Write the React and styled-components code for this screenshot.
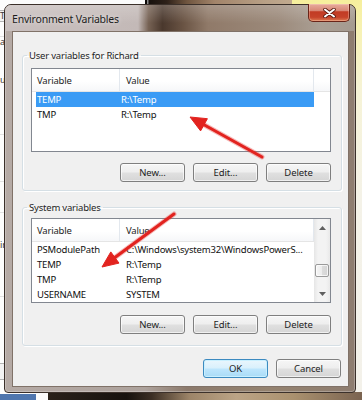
import React from 'react'
import styled, { createGlobalStyle, css } from 'styled-components'

const GlobalStyle = createGlobalStyle`
  *, *::before, *::after { box-sizing: border-box; }
  html, body { margin: 0; padding: 0; background: #fbfbfb; }
  body {
    font-family: "Noto Sans", "Open Sans", sans-serif;
    font-size: 9.5px;
    overflow: hidden;
  }
`

const userVars = [
  { name: 'TEMP', value: 'R:\\Temp', selected: true },
  { name: 'TMP', value: 'R:\\Temp' },
]

const systemVars = [
  { name: 'PSModulePath', value: 'C:\\Windows\\system32\\WindowsPowerS...' },
  { name: 'TEMP', value: 'R:\\Temp' },
  { name: 'TMP', value: 'R:\\Temp' },
  { name: 'USERNAME', value: 'SYSTEM' },
]

// strip of the window that sits behind the dialog on the left
const backRows = [
  { h: 10 },
  { h: 12, text: 'T', boxed: true },
  { h: 15, line: true },
  { h: 10, text: 'a' },
  { h: 28 },
  { h: 10, text: 'us' },
  { h: 50, line: true },
  { h: 47, line: true },
  { h: 31, line: true },
  { h: 27 },
  { h: 10, text: 'ir' },
  { h: 47, line: true },
  { h: 66 },
  { h: 17, boxed: true },
]

export default function App(){
  return(
    <>
      <GlobalStyle />
      <Desktop>
        <BackWindow>
          {backRows.map((r, i) => (
            <BackRow key={i} $h={r.h} $line={r.line} $boxed={r.boxed}>{r.text}</BackRow>
          ))}
        </BackWindow>
        <Photo />
        <Note />
        <BottomPhoto />
        <TaskChip />

        <Dialog>
          <TitleBar>
            <Title>Environment Variables</Title>
            <CloseButton>
              <svg width="13" height="10" viewBox="0 0 13 10">
                <path d="M2 1.5 L11 8.5 M11 1.5 L2 8.5" stroke="#5b1a10" strokeWidth="3.6" strokeLinecap="round" />
                <path d="M2 1.5 L11 8.5 M11 1.5 L2 8.5" stroke="#ffffff" strokeWidth="2" strokeLinecap="round" />
              </svg>
            </CloseButton>
          </TitleBar>

          <Client>
            <Group $mt={16} $pt={5} $pb={8}>
              <Legend>User variables for Richard</Legend>
              <VarList rows={userVars} height={84} valueInset={1} />
              <ButtonRow $mt={11}>
                <Button>New...</Button>
                <Button>Edit...</Button>
                <Button>Delete</Button>
              </ButtonRow>
            </Group>

            <Group $mt={9} $pt={3} $pb={11}>
              <Legend>System variables</Legend>
              <VarList rows={systemVars} height={85} valueInset={6} scroll={28} />
              <ButtonRow $mt={12}>
                <Button>New...</Button>
                <Button>Edit...</Button>
                <Button>Delete</Button>
              </ButtonRow>
            </Group>

            <DialogButtons>
              <Button $default>OK</Button>
              <Button>Cancel</Button>
            </DialogButtons>
          </Client>
        </Dialog>

        <Arrows viewBox="0 0 362 400">
          <g stroke="#e63a36" strokeWidth="5" strokeOpacity="0.35" fill="none" strokeLinecap="round">
            <line x1="262" y1="157" x2="204" y2="124.8" />
            <line x1="174" y1="214" x2="114.9" y2="257.5" />
          </g>
          <g stroke="#e2231f" strokeWidth="3" fill="none" strokeLinecap="round">
            <line x1="262" y1="157" x2="204" y2="124.8" />
            <line x1="174" y1="214" x2="114.9" y2="257.5" />
          </g>
          <g fill="#e2231f" stroke="#e2231f" strokeWidth="1" strokeLinejoin="round">
            <polygon points="190,117 207.4,118.7 200.6,130.9" />
            <polygon points="102,267 119,263.1 110.8,251.9" />
          </g>
        </Arrows>
      </Desktop>
    </>
  )
}

function VarList({ rows, height, valueInset, scroll }){
  return(
    <ListBox $h={height}>
      <ListMain>
        <Header>
          <HeadCell $w={88} $pl={5}>Variable</HeadCell>
          <HeadCell $w={194} $pl={6}>Value</HeadCell>
          <HeadFiller />
        </Header>
        {rows.map(r => (
          <Row key={r.name} $selected={r.selected}>
            <Cell $w={84} $pl={1}>{r.name}</Cell>
            <Cell $w={194} $pl={valueInset}>{r.value}</Cell>
          </Row>
        ))}
      </ListMain>
      {scroll !== undefined && (
        <Scrollbar>
          <ScrollArrow>
            <svg width="7" height="4" viewBox="0 0 7 4"><polygon points="0,4 3.5,0 7,4" fill="#5f5f5f" /></svg>
          </ScrollArrow>
          <Track>
            <Thumb $offset={scroll} />
          </Track>
          <ScrollArrow>
            <svg width="7" height="4" viewBox="0 0 7 4"><polygon points="0,0 3.5,4 7,0" fill="#5f5f5f" /></svg>
          </ScrollArrow>
        </Scrollbar>
      )}
    </ListBox>
  )
}

const Desktop = styled.div`
  position: relative;
  width: 362px;
  height: 400px;
  overflow: hidden;
  background: #fbfbfb;
`

const BackWindow = styled.div`
  position: absolute;
  left: 0;
  top: 0;
  width: 12px;
  height: 400px;
  display: flex;
  flex-direction: column;
  overflow: hidden;
  background: #fdfdfd;
`

const BackRow = styled.div`
  height: ${p => p.$h}px;
  flex-shrink: 0;
  display: flex;
  align-items: center;
  font-size: 9px;
  line-height: 10px;
  color: #3a3a3a;
  ${p => p.$line && css`
    border-bottom: 1px solid #e2e2e2;
  `}
  ${p => p.$boxed && css`
    border: 1px solid #b4b4b4;
    border-left: none;
    background: #f3f3f3;
  `}
`

const Photo = styled.div`
  position: absolute;
  left: 145px;
  top: 0;
  width: 150px;
  height: 12px;
  background: linear-gradient(90deg, #0d0b09 0, #0d0b09 2px, #8a8a8a 2px, #8a8a8a 3px, #17110d 4px, #2e2119 22px, #6f553f 42px, #a2846a 70px, #b8a086 120px, #c2ab90 150px);
`

const Note = styled.div`
  position: absolute;
  left: 292px;
  top: 0;
  width: 70px;
  height: 400px;
  background: linear-gradient(180deg, #f6ef9c 0, #f7f2b4 30px, #f6f3d6 90px, #f4f2e8 200px, #f3f1ea 400px);
`

const BottomPhoto = styled.div`
  position: absolute;
  left: 48px;
  top: 392px;
  width: 314px;
  height: 8px;
  background: linear-gradient(90deg, #2a211a 0, #17120e 25%, #3b2e24 33%, #9c8468 45%, #bca486 60%, #aa916f 78%, #7a6350 100%);
`

const TaskChip = styled.div`
  position: absolute;
  left: 0;
  top: 394px;
  width: 36px;
  height: 6px;
  background: #4f76ae;
`

const Dialog = styled.div`
  position: absolute;
  left: 4px;
  top: 4px;
  width: 352px;
  height: 389px;
  display: flex;
  flex-direction: column;
  padding: 0 6px 5px 7px;
  border: 1px solid #3b302a;
  border-radius: 7px 7px 4px 4px;
  background: linear-gradient(90deg, #b5aaa5 0%, #ada29c 40%, #8c7a6c 52%, #94826f 75%, #8e7d70 100%);
  box-shadow: inset 0 0 0 1px rgba(255, 255, 255, 0.25);
`

const TitleBar = styled.div`
  height: 26px;
  flex-shrink: 0;
  margin: 0 -6px 0 -7px;
  padding: 0 5px 0 7px;
  display: flex;
  align-items: center;
  justify-content: space-between;
  border-radius: 6px 6px 0 0;
  background:
    linear-gradient(180deg, rgba(255, 255, 255, 0.2), rgba(255, 255, 255, 0) 70%),
    linear-gradient(90deg, #c9c0bf 0%, #c3b9b7 38%, #766254 41%, #4a382d 45%, #6a5444 51%, #907a69 58%, #9c8a7b 78%, #aa9f94 90%, #a59a90 100%);
`

const Title = styled.span`
  font-size: 10.5px;
  letter-spacing: -0.2px;
  color: #1d1d1d;
  text-shadow: 0 0 5px rgba(255, 255, 255, 0.75);
  margin-top: 1px;
`

const CloseButton = styled.div`
  align-self: flex-start;
  width: 42px;
  height: 18px;
  margin-top: -1px;
  display: flex;
  align-items: center;
  justify-content: center;
  border: 1px solid #6a2418;
  border-top: none;
  border-radius: 0 0 5px 5px;
  background: linear-gradient(180deg, #e8ab9d 0%, #d98a78 38%, #c23b24 46%, #c6432a 78%, #de7a52 100%);
  box-shadow: inset 0 0 0 1px rgba(255, 220, 200, 0.35);
`

const Client = styled.div`
  flex: 1;
  display: flex;
  flex-direction: column;
  padding: 0 6px 0 9px;
  background: #f0f0f0;
  border: 1px solid #807268;
`

const Group = styled.fieldset`
  margin: ${p => p.$mt}px 0 0 0;
  padding: ${p => p.$pt}px 10px ${p => p.$pb}px 8px;
  min-width: 0;
  border: 1px solid #d5dfe5;
  border-radius: 3px;
  box-shadow: inset 1px 1px 0 #fff, 1px 1px 0 #fff;
`

const Legend = styled.legend`
  margin-left: -4px;
  padding: 0 2px;
  line-height: 15px;
  font-size: 9.5px;
  letter-spacing: -0.2px;
  color: #1e1e1e;
`

const ListBox = styled.div`
  display: flex;
  height: ${p => p.$h}px;
  border: 1px solid #828790;
  background: #fff;
  overflow: hidden;
`

const ListMain = styled.div`
  flex: 1;
  min-width: 0;
  display: flex;
  flex-direction: column;
`

const Header = styled.div`
  height: 23px;
  flex-shrink: 0;
  display: flex;
  border-bottom: 1px solid #e5e5e5;
  background: linear-gradient(180deg, #ffffff 0%, #ffffff 55%, #f6f7f9 100%);
`

const HeadCell = styled.div`
  width: ${p => p.$w}px;
  flex-shrink: 0;
  display: flex;
  align-items: center;
  padding-left: ${p => p.$pl}px;
  border-right: 1px solid #e3e8ee;
  color: #1e1e1e;
  letter-spacing: -0.2px;
`

const HeadFiller = styled.div`
  flex: 1;
`

const Row = styled.div`
  display: flex;
  height: 15px;
  flex-shrink: 0;
  margin-left: 4px;
  align-self: flex-start;
  color: #111;
  ${p => p.$selected && css`
    background: #3a9bf5;
    color: #fff;
  `}
`

const Cell = styled.div`
  width: ${p => p.$w}px;
  padding-left: ${p => p.$pl}px;
  line-height: 15px;
  white-space: nowrap;
  overflow: hidden;
  text-overflow: ellipsis;
  letter-spacing: -0.2px;
`

const Scrollbar = styled.div`
  width: 16px;
  flex-shrink: 0;
  display: flex;
  flex-direction: column;
  background: linear-gradient(90deg, #e6e6e6 0%, #f3f3f3 25%, #f3f3f3 75%, #e9e9e9 100%);
`

const ScrollArrow = styled.div`
  height: 17px;
  flex-shrink: 0;
  display: flex;
  align-items: center;
  justify-content: center;
`

const Track = styled.div`
  flex: 1;
`

const Thumb = styled.div`
  height: 13px;
  margin: ${p => p.$offset}px 1px 0 1px;
  border: 1px solid #9a9a9a;
  border-radius: 2px;
  background: linear-gradient(90deg, #f6f6f6 0%, #ececec 50%, #dcdcdc 50%, #d4d4d4 100%);
  box-shadow: inset 0 0 0 1px rgba(255, 255, 255, 0.7);
`

const ButtonRow = styled.div`
  display: flex;
  justify-content: flex-end;
  gap: 8px;
  margin-top: ${p => p.$mt}px;
`

const DialogButtons = styled.div`
  display: flex;
  justify-content: flex-end;
  gap: 8px;
  margin-top: 13px;
  padding-right: 1px;
`

const Button = styled.button`
  width: 65px;
  height: 19px;
  padding: 0;
  font-family: inherit;
  font-size: 9.5px;
  letter-spacing: -0.1px;
  color: #1e1e1e;
  border: 1px solid #7f7f7f;
  border-radius: 3px;
  background: linear-gradient(180deg, #f6f6f6 0%, #eeeeee 48%, #e0e0e0 52%, #d5d5d5 100%);
  box-shadow: inset 0 0 0 1px rgba(255, 255, 255, 0.65);
  ${p => p.$default && css`
    border-color: #3c8ac0;
    background: linear-gradient(180deg, #eaf6fd 0%, #d9f0fc 48%, #bee6fd 52%, #a9dbf6 100%);
    box-shadow: inset 0 0 0 1px #c9f0ff;
  `}
`

const Arrows = styled.svg`
  position: absolute;
  left: 0;
  top: 0;
  width: 362px;
  height: 400px;
  pointer-events: none;
`
